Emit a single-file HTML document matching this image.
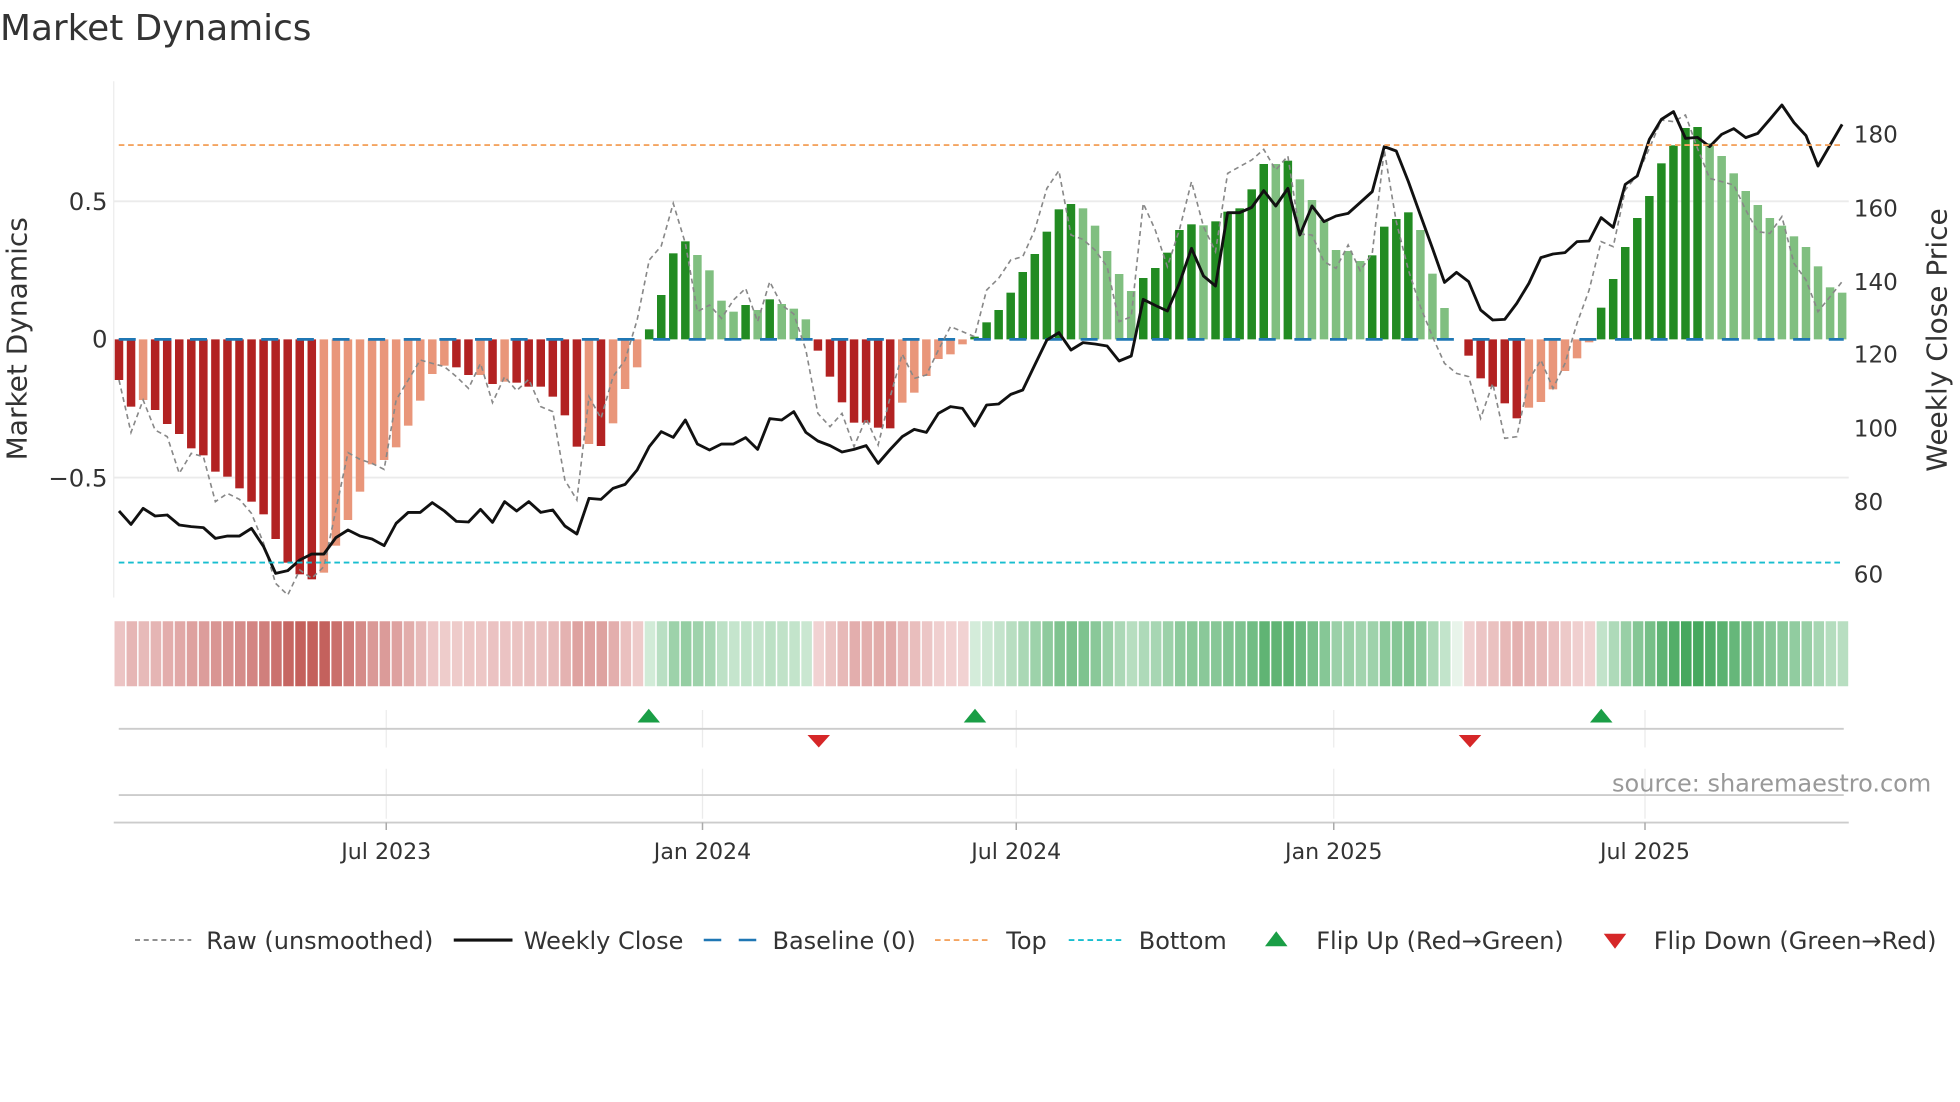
<!DOCTYPE html>
<html><head><meta charset="utf-8"><style>
html,body{margin:0;padding:0;background:#fff;width:1960px;height:1102px;overflow:hidden}
svg{display:block}
text{font-family:"DejaVu Sans","Liberation Sans",sans-serif}
</style></head><body>
<svg id="s" width="1960" height="1102" viewBox="0 0 1568 881.6" xmlns="http://www.w3.org/2000/svg">
<rect width="1568" height="881.6" fill="#fff"/>
<text x="0" y="32" font-size="28.7" fill="#333">Market Dynamics</text>
<line x1="91" y1="65" x2="91" y2="478" stroke="#ebebeb" stroke-width="1"/>
<line x1="91" y1="161" x2="1479" y2="161" stroke="#ebebeb" stroke-width="1.5"/>
<line x1="91" y1="382" x2="1479" y2="382" stroke="#ebebeb" stroke-width="1.5"/>
<g id="bars"></g>
<g id="lines"></g>
<line x1="95" y1="116" x2="1475" y2="116" stroke="#f4a460" stroke-width="1.5" stroke-dasharray="4.5,3"/>
<line x1="95" y1="450" x2="1475" y2="450" stroke="#17becf" stroke-width="1.5" stroke-dasharray="4.5,3"/>
<g font-size="19.5" fill="#333" text-anchor="end">
<text x="86" y="168">0.5</text><text x="86" y="278">0</text><text x="86" y="389">−0.5</text>
</g>
<g font-size="18.5" fill="#333">
<text x="1483" y="114">180</text><text x="1483" y="173">160</text><text x="1483" y="232">140</text>
<text x="1483" y="290">120</text><text x="1483" y="349">100</text><text x="1483" y="408">80</text><text x="1483" y="466">60</text>
</g>
<text transform="translate(21,271) rotate(-90)" font-size="22.4" fill="#333" text-anchor="middle">Market Dynamics</text>
<text transform="translate(1557,272) rotate(-90)" font-size="22.4" fill="#333" text-anchor="middle">Weekly Close Price</text>
<g id="heat"></g>
<g stroke="#ebebeb" stroke-width="1">
<line x1="309" y1="568" x2="309" y2="598"/><line x1="562" y1="568" x2="562" y2="598"/><line x1="813" y1="568" x2="813" y2="598"/><line x1="1067" y1="568" x2="1067" y2="598"/><line x1="1316" y1="568" x2="1316" y2="598"/>
<line x1="309" y1="615" x2="309" y2="655"/><line x1="562" y1="615" x2="562" y2="655"/><line x1="813" y1="615" x2="813" y2="655"/><line x1="1067" y1="615" x2="1067" y2="655"/><line x1="1316" y1="615" x2="1316" y2="655"/>
</g>
<line x1="95" y1="583" x2="1475" y2="583" stroke="#ccc" stroke-width="1.5"/>
<line x1="95" y1="636" x2="1475" y2="636" stroke="#ccc" stroke-width="1.5"/>
<line x1="91" y1="658" x2="1479" y2="658" stroke="#ccc" stroke-width="1.5"/>
<g stroke="#aaa" stroke-width="1.2">
<line x1="309" y1="658" x2="309" y2="664"/><line x1="562" y1="658" x2="562" y2="664"/><line x1="813" y1="658" x2="813" y2="664"/><line x1="1067" y1="658" x2="1067" y2="664"/><line x1="1316" y1="658" x2="1316" y2="664"/>
</g>
<g fill="#1a9e46">
<polygon points="510,578 528,578 519,567"/><polygon points="771,578 789,578 780,567"/><polygon points="1272,578 1290,578 1281,567"/>
</g>
<g fill="#d62728">
<polygon points="646,588 664,588 655,598"/><polygon points="1167,588 1185,588 1176,598"/>
</g>
<text x="1545" y="633" font-size="19.2" fill="#999" text-anchor="end">source: sharemaestro.com</text>
<g font-size="17.7" fill="#333" text-anchor="middle">
<text x="309" y="687">Jul 2023</text><text x="562" y="687">Jan 2024</text><text x="813" y="687">Jul 2024</text><text x="1067" y="687">Jan 2025</text><text x="1316" y="687">Jul 2025</text>
</g>
<g font-size="19.2" fill="#333">
<line x1="108" y1="752" x2="153" y2="752" stroke="#808080" stroke-width="1.4" stroke-dasharray="4,3"/>
<text x="165" y="759">Raw (unsmoothed)</text>
<line x1="363" y1="752" x2="410" y2="752" stroke="#111" stroke-width="2.5"/>
<text x="419" y="759">Weekly Close</text>
<line x1="563" y1="752" x2="607" y2="752" stroke="#1f77b4" stroke-width="2" stroke-dasharray="14,14"/>
<text x="618" y="759">Baseline (0)</text>
<line x1="748" y1="752" x2="793" y2="752" stroke="#f4a460" stroke-width="1.5" stroke-dasharray="4.5,3"/>
<text x="805" y="759">Top</text>
<line x1="855" y1="752" x2="900" y2="752" stroke="#17becf" stroke-width="1.5" stroke-dasharray="4.5,3"/>
<text x="911" y="759">Bottom</text>
<polygon points="1012,757 1030,757 1021,745" fill="#1a9e46"/>
<text x="1053" y="759">Flip Up (Red→Green)</text>
<polygon points="1283,747 1301,747 1292,759" fill="#d62728"/>
<text x="1323" y="759">Flip Down (Green→Red)</text>
</g>
</svg>
<script>
(function(){
var NS="http://www.w3.org/2000/svg";
function el(n,a,p){var e=document.createElementNS(NS,n);for(var k in a)e.setAttribute(k,a[k]);p.appendChild(e);return e;}
var segs=[
[144,"600D,680D,660L,690D,732D,762D,805D,826D,875D,890D,925D,965D,1003D,1077D,1148D,1183D,1198D,1178L,1097L,1020L,935L,853L,840L,802L,737L,662L,582L,557L,562D,585D,585L,612D,605L,608D,620D,620D,650D,706D"],
[144,"800D,792L,798D,730L,627L,562L,448G,345G,220G,184G,225g,271g,362g,395g,375G,390g,358G,372g,386g,418g,512D,590D,667D,728D,728D,743D,745D,668L,638L,588L,537L,523L,493L,470G,427G,390G,338G"],
[96,"456G,402G,335G,268G,252G,265g,317g,393g,462g,513g,474G,444G,398G,330G,313G,316g,304G,275G,265G,208G,132G,132g,122G,178g,240g,300g,390g,393g,423g,406G,320G,297G,277G,330g,461g,564g"],
[0,"271.5Z"],
[72,"797D,865D,890D,940D,985D,953L,936L,898L,843L,805L,757L,653G,567G,471G,384G,318G,220G,166G,114G,111G,160g,198g,250g,303g,345g,384g,407g,439g,471g,529g,592g,608g"]];
var bars=[];
segs.forEach(function(s){s[1].split(",").forEach(function(t){var c=t.slice(-1),v=parseFloat(t);var y=s[0]?s[0]+v/3.75:v;bars.push([y,c]);});});
var Z=271.5,col={D:"#b22222",L:"#e9967a",G:"#228b22",g:"#80bf80",Z:"#fff"};
var gb=document.getElementById("bars"),gh=document.getElementById("heat");
function mix(a,b,t){t=Math.max(0,Math.min(1,t));return "rgb("+[0,1,2].map(function(i){return Math.round(a[i]+(b[i]-a[i])*t)}).join(",")+")";}
bars.forEach(function(b,i){
 var x=95.2+9.64*i,y=b[0];
 if(b[1]!="Z"){var top=Math.min(y,Z),h=Math.abs(y-Z);el("rect",{x:x-3.4,y:top,width:6.8,height:h,fill:col[b[1]]},gb);}
 var v=(Z-y)/221,c;
 if(v<0)c=mix([241,210,210],[196,96,92],(-v-0.05)/0.8);
 else c=mix([212,236,218],[70,168,94],(v-0.02)/0.75);
 if(b[1]=="Z")c="#e8f4ea";
 el("rect",{x:91+9.64*i+0.6,y:497,width:8.44,height:52,fill:c},gh);
});
el("line",{x1:95,y1:Z,x2:1475,y2:Z,stroke:"#1f77b4","stroke-width":2.2,"stroke-dasharray":"13.6,14.9"},gb);
function series(arr){var pts=[],k=0;arr.forEach(function(s){s[1].split(",").forEach(function(t){pts.push((95.2+9.64*k).toFixed(1)+","+(s[0]+parseFloat(t)/3.75).toFixed(1));k++;});});return pts.join(" ");}
var raw=[[144,"600,757,660,750,770,880,820,830,965,940,958,1000,1090,1210,1245,1170,1195,1160,990,818,838,850,868,660,600,540,550,560,590,625,550,668,590,632,598,680,695,900"],
[144,"960,650,715,590,540,420,240,198,70,190,395,375,415,360,325,425,305,375,402,510,700,740,700,800,715,795,650,522,595,585,510,440,455,470,330,295,240"],
[96,"410,330,205,152,345,358,390,440,605,590,250,330,440,330,185,320,395,160,140,120,88,150,108,342,345,425,445,375,452,400,90,305,450,560,650,730,760"],
[72,"860,985,880,1045,1040,870,810,895,820,700,600,455,470,300,255,175,90,95,75,175,265,275,285,360,425,430,380,520,570,665,620,575"]];
var price=[[144,"993,1033,985,1008,1005,1035,1040,1043,1075,1068,1068,1045,1100,1180,1172,1140,1122,1122,1073,1050,1068,1077,1097,1030,997,997,968,993,1024,1026,988,1027,965,993,965,997,990,1038"],
[144,"1062,955,958,925,913,870,800,755,772,720,792,810,792,792,773,808,716,720,695,757,783,797,816,808,797,850,808,770,748,757,700,680,685,738,675,672,643,630"],
[96,"735,660,638,690,668,672,678,723,708,538,556,573,490,385,468,498,278,278,262,212,258,205,345,258,305,288,280,248,215,80,93,185,285,385,487,457"],
[72,"575,660,690,688,640,580,503,492,488,455,453,383,412,283,258,148,88,65,145,142,170,133,116,143,130,88,45,98,137,228,165,103"]];
var gl=document.getElementById("lines");
el("polyline",{points:series(raw),fill:"none",stroke:"#888","stroke-width":1.3,"stroke-dasharray":"4,3"},gl);
el("polyline",{points:series(price),fill:"none",stroke:"#111","stroke-width":2.3,"stroke-linejoin":"round"},gl);
})();
</script>
</body></html>
